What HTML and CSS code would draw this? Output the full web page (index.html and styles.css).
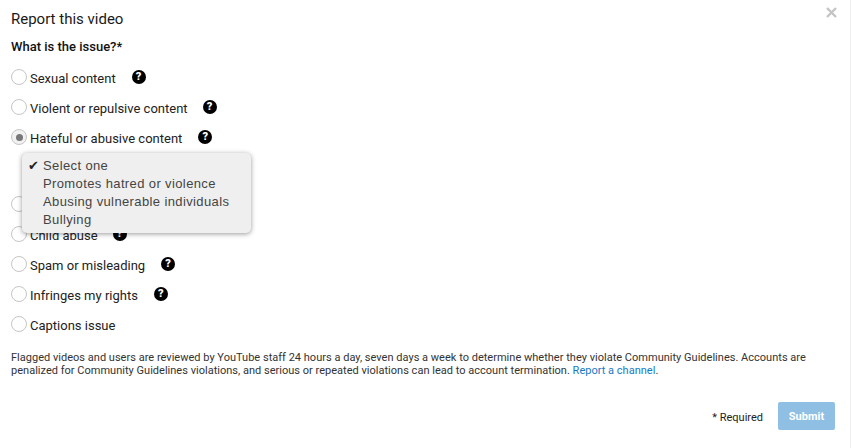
FILE: index.html
```html
<!DOCTYPE html>
<html lang="en">
<head>
<meta charset="utf-8">
<title>Report this video</title>
<link rel="stylesheet" href="styles.css">
</head>
<body>
<div class="dialog">
  <button class="close" aria-label="Close"><svg width="11" height="11" viewBox="0 0 11 11"><path d="M1 1 10 10M10 1 1 10" stroke="#c4c4c4" stroke-width="2.4" fill="none"/></svg></button>
  <h1 class="title">Report this video</h1>
  <h2 class="question">What is the issue?*</h2>
  <ul class="options">
    <li class="option"><span class="radio"></span><span class="label">Sexual content</span><span class="help gap-16">?</span></li>
    <li class="option"><span class="radio"></span><span class="label">Violent or repulsive content</span><span class="help gap-15">?</span></li>
    <li class="option"><span class="radio checked"></span><span class="label">Hateful or abusive content</span><span class="help gap-16">?</span></li>
    <li class="select-slot"></li>
    <li class="option"><span class="radio"></span><span class="label">Harmful dangerous acts</span></li>
    <li class="option"><span class="radio"></span><span class="label">Child abuse</span><span class="help gap-15">?</span></li>
    <li class="option"><span class="radio"></span><span class="label">Spam or misleading</span><span class="help gap-16">?</span></li>
    <li class="option"><span class="radio"></span><span class="label">Infringes my rights</span><span class="help gap-16">?</span></li>
    <li class="option"><span class="radio"></span><span class="label">Captions issue</span></li>
  </ul>
  <p class="notice">Flagged videos and users are reviewed by YouTube staff 24 hours a day, seven days a week to determine whether they violate Community Guidelines. Accounts are penalized for Community Guidelines violations, and serious or repeated violations can lead to account termination. <a class="link" href="#">Report a channel</a>.</p>
  <div class="footer">
    <span class="required">* Required</span>
    <button class="submit">Submit</button>
  </div>
  <ul class="menu">
    <li class="menu-item"><span class="check">✔</span>Select one</li>
    <li class="menu-item">Promotes hatred or violence</li>
    <li class="menu-item">Abusing vulnerable individuals</li>
    <li class="menu-item">Bullying</li>
  </ul>
</div>
</body>
</html>
```
FILE: styles.css
```css
* { box-sizing: border-box; }
html, body { margin: 0; padding: 0; background: #fff; }
body { font-family: Roboto, "Liberation Sans", sans-serif; color: #222; overflow: hidden; }
.dialog { position: relative; width: 851px; height: 448px; padding: 9px 11px 0; border-right: 1px solid #eee; }
.close { position: absolute; top: 7px; right: 13px; padding: 0; border: 0; background: none; line-height: 0; }
.title { margin: 0; font-size: 15px; font-weight: 400; line-height: 20px; color: #1a1a1a; }
.question { margin: 9px 0 0; font-size: 13px; font-weight: 500; line-height: 18px; color: #111; }
.options { list-style: none; margin: 6px 0 0; padding: 0; }
.option { display: flex; align-items: center; height: 30px; }
.select-slot { height: 37px; }
.radio { width: 16px; height: 16px; margin-right: 3px; border: 1px solid #c6c6c6; border-radius: 50%; background: #fff; display: flex; align-items: center; justify-content: center; }
.radio.checked { background: #f1f1f1; }
.radio.checked::after { content: ""; width: 7px; height: 7px; border-radius: 50%; background: #777; }
.label { padding-top: 4px; font-size: 13px; line-height: 18px; color: #222; }
.help { width: 14px; height: 14px; border-radius: 50%; background: #000; color: #fff; font-size: 11px; font-weight: 900; line-height: 14px; text-align: center; }
.gap-15 { margin-left: 15px; }
.gap-16 { margin-left: 16px; }
.notice { margin: 12px 0 0; width: 815px; font-size: 11px; line-height: 13px; color: #333; letter-spacing: .015px; }
.link { color: #167ac6; text-decoration: none; }
.footer { display: flex; justify-content: flex-end; align-items: center; margin-top: 25px; width: 824px; }
.required { font-size: 11px; color: #222; margin-right: 15px; padding-top: 2px; }
.submit { width: 57px; height: 28px; padding: 0; border: 0; border-radius: 2px; background: #8fbfe3; color: #fff; font: 700 11px Roboto, "Liberation Sans", sans-serif; }
.menu { position: absolute; left: 22px; top: 153px; width: 229px; height: 80px; margin: 0; padding: 4px 0; list-style: none; background: #efefef; border-radius: 5px; box-shadow: 0 1px 5px rgba(0,0,0,.4); }
.menu-item { position: relative; height: 18px; padding-left: 21px; font-family: "Liberation Sans", sans-serif; font-size: 13px; line-height: 18px; color: #444; letter-spacing: .38px; }
.check { position: absolute; left: 6px; top: 0; font-family: "DejaVu Sans", sans-serif; font-size: 13px; color: #222; letter-spacing: 0; }
```
